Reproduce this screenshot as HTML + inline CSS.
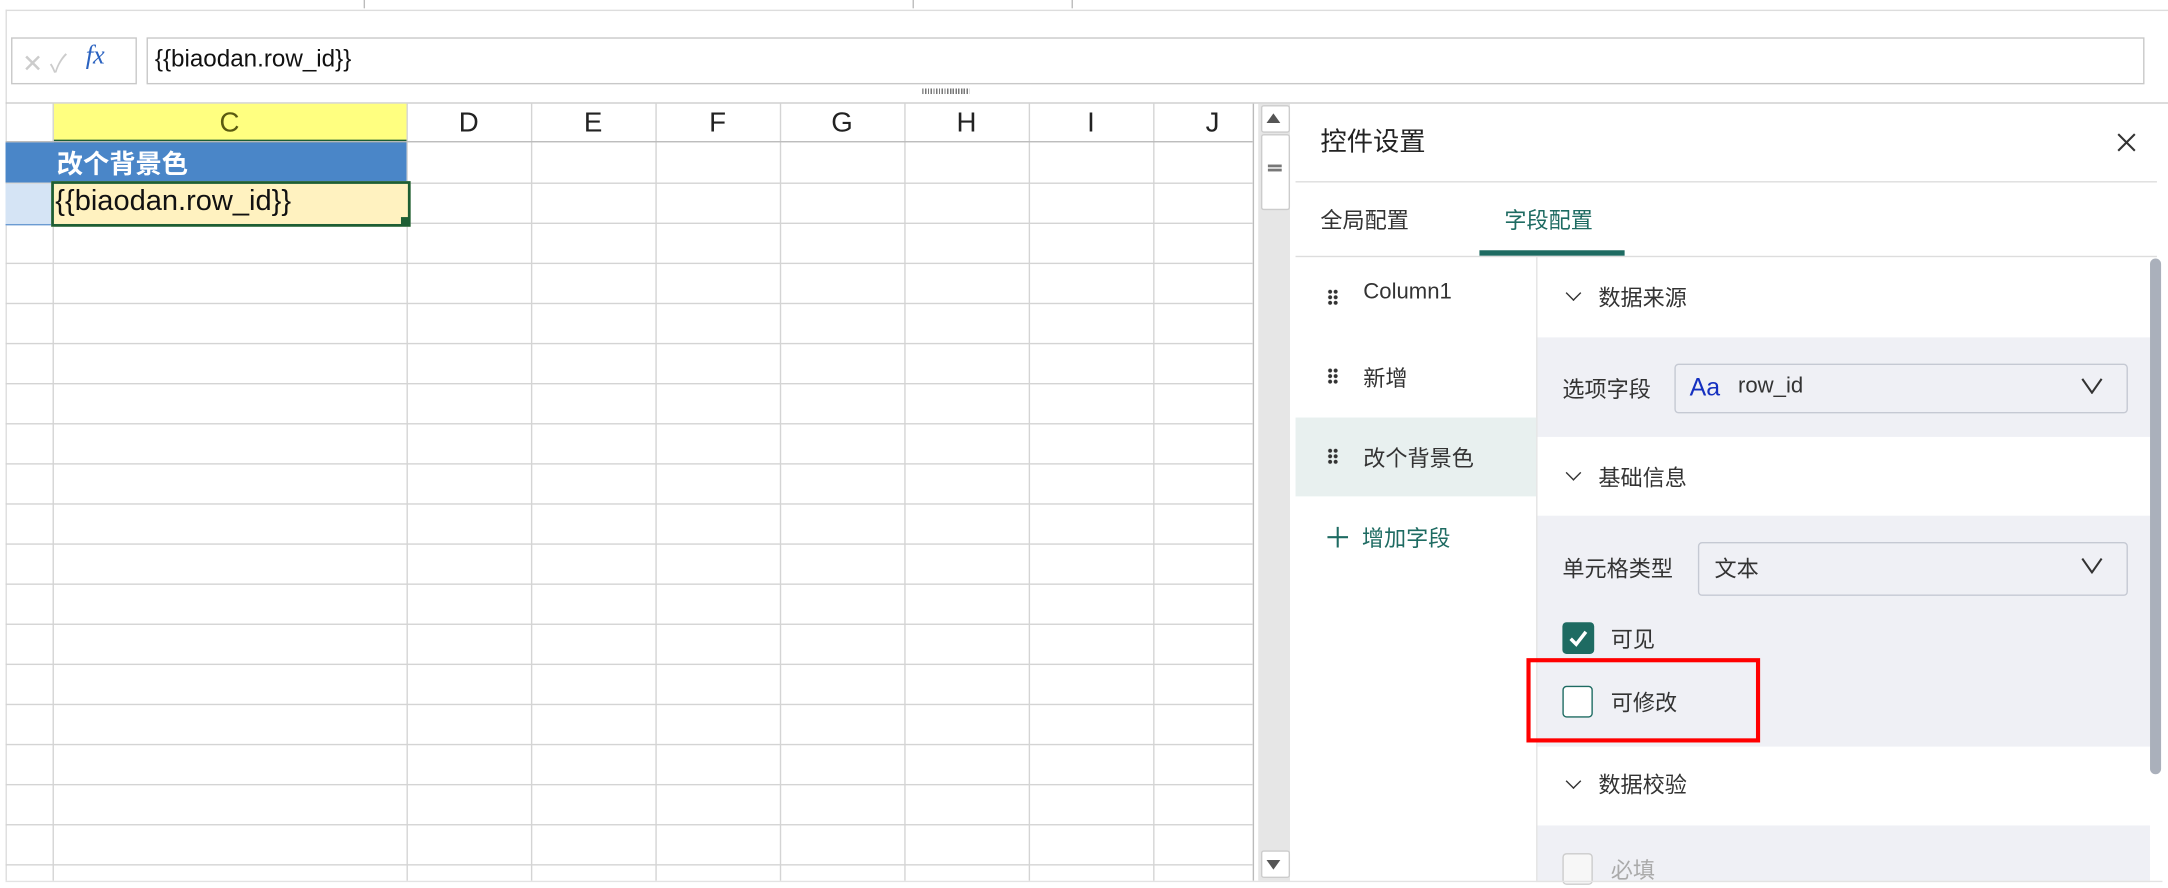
<!DOCTYPE html>
<html><head><meta charset="utf-8"><style>
html,body{margin:0;padding:0;width:2168px;height:888px;overflow:hidden;background:#fff}
#w{position:absolute;left:0;top:0;width:1568px;height:642px;transform:scale(1.38265);transform-origin:0 0;font-family:"Liberation Sans","Noto Sans CJK SC",sans-serif;color:#222}
.a{position:absolute}
.hl{position:absolute;height:1px;background:#d4d4d4}
.vl{position:absolute;width:1px;background:#d4d4d4}
.ch{position:absolute;top:75px;height:27px;font-size:20px;text-align:center;line-height:28px;color:#222}
.t{position:absolute;font-size:16px;white-space:nowrap}
.p{margin-top:-3px}
.dots{position:absolute;width:8px;height:12px;background:radial-gradient(circle,#333 1.3px,transparent 1.6px) 0 0/4px 4px}
.chev{position:absolute;width:7px;height:7px;border-right:1.3px solid #333;border-bottom:1.3px solid #333;transform:rotate(45deg)}
.sel{position:absolute;border:1px solid #c5c9d3;border-radius:3px;background:#eff0f5}
</style></head><body><div id="w">
<div class="hl" style="left:4px;top:7px;width:1564px;background:#ddd"></div>
<div class="vl" style="left:263px;top:0;height:6px;background:#bbb"></div>
<div class="vl" style="left:660px;top:0;height:6px;background:#bbb"></div>
<div class="vl" style="left:775px;top:0;height:6px;background:#bbb"></div>
<div class="vl" style="left:4px;top:7px;height:630px;background:#ddd"></div>
<div class="a" style="left:8px;top:27px;width:89px;height:32px;border:1px solid #c8c8c8"></div>
<div class="t" style="left:16px;top:32px;color:#ccc;font-size:18px">✕ ✓</div>
<div class="t" style="left:62px;top:30px;color:#2a62c0;font-style:italic;font-family:'Liberation Serif',serif;font-size:19px">fx</div>
<div class="a" style="left:106px;top:27px;width:1443px;height:32px;border:1px solid #c8c8c8"></div>
<div class="t" style="left:112px;top:32px;font-size:17.5px;color:#111">{{biaodan.row_id}}</div>
<div class="a" style="left:667px;top:64px;width:34px;height:4px;background:repeating-linear-gradient(90deg,#777 0 1px,transparent 1px 2px)"></div>
<div class="hl" style="left:4px;top:74px;width:1564px;background:#ccc"></div>
<div class="a" style="left:38px;top:75px;width:256px;height:27px;background:#ffff80"></div>
<div class="a" style="left:38px;top:101px;width:256px;height:2px;background:#1d5e34"></div>
<div class="ch" style="left:38px;width:256px;color:#5a5a10">C</div>
<div class="ch" style="left:294px;width:90px">D</div>
<div class="ch" style="left:384px;width:90px">E</div>
<div class="ch" style="left:474px;width:90px">F</div>
<div class="ch" style="left:564px;width:90px">G</div>
<div class="ch" style="left:654px;width:90px">H</div>
<div class="ch" style="left:744px;width:90px">I</div>
<div class="ch" style="left:834px;width:86px">J</div>
<div class="vl" style="left:38px;top:75px;height:562px"></div>
<div class="vl" style="left:294px;top:75px;height:562px"></div>
<div class="vl" style="left:384px;top:75px;height:562px"></div>
<div class="vl" style="left:474px;top:75px;height:562px"></div>
<div class="vl" style="left:564px;top:75px;height:562px"></div>
<div class="vl" style="left:654px;top:75px;height:562px"></div>
<div class="vl" style="left:744px;top:75px;height:562px"></div>
<div class="vl" style="left:834px;top:75px;height:562px"></div>
<div class="vl" style="left:906px;top:75px;height:562px;background:#bbb"></div>
<div class="hl" style="left:4px;top:102px;width:902px;background:#bbb"></div>
<div id="rows"></div>
<div class="a" style="left:4px;top:103px;width:290px;height:29px;background:#4a86c8"></div>
<div class="t" style="left:41px;top:104px;color:#fff;font-weight:bold;font-size:19px">改个背景色</div>
<div class="a" style="left:4px;top:133px;width:34px;height:29px;background:#d5e4f5;border-bottom:1px solid #6b9bd2"></div>
<div class="a" style="left:37px;top:131px;width:256px;height:29px;background:#fff2c0;border:2px solid #1d5e34"></div>
<div class="a" style="left:290px;top:157px;width:6px;height:6px;background:#1d5e34"></div>
<div class="t" style="left:40px;top:134px;color:#111;font-size:21px">{{biaodan.row_id}}</div>
<div class="a" style="left:910px;top:75px;width:23px;height:562px;background:#e6e6e6"></div>
<div class="a" style="left:912px;top:76px;width:19px;height:18px;background:#fff;border:1px solid #ccc;border-radius:2px"></div>
<div class="a" style="left:916px;top:82px;width:0;height:0;border-left:5px solid transparent;border-right:5px solid transparent;border-bottom:7px solid #555"></div>
<div class="a" style="left:912px;top:97px;width:19px;height:53px;background:#fff;border:1px solid #ccc;border-radius:2px"></div>
<div class="a" style="left:917px;top:119px;width:10px;height:1.5px;background:#777;box-shadow:0 3px 0 #777"></div>
<div class="a" style="left:912px;top:615px;width:19px;height:18px;background:#fff;border:1px solid #ccc;border-radius:2px"></div>
<div class="a" style="left:916px;top:622px;width:0;height:0;border-left:5px solid transparent;border-right:5px solid transparent;border-top:7px solid #555"></div>
<div class="t p" style="left:955px;top:91px;font-size:19px;color:#222">控件设置</div>
<svg class="a" style="left:1531px;top:96px" width="14" height="14"><path d="M1 1L13 13M13 1L1 13" stroke="#333" stroke-width="1.5"/></svg>
<div class="hl" style="left:937px;top:131px;width:623px;background:#ddd"></div>
<div class="t p" style="left:955px;top:149px;color:#333">全局配置</div>
<div class="t p" style="left:1088px;top:149px;color:#1e6b62">字段配置</div>
<div class="a" style="left:1070px;top:181px;width:105px;height:4px;background:#1e6b62"></div>
<div class="hl" style="left:937px;top:185px;width:623px;background:#ddd"></div>
<div class="vl" style="left:1111px;top:186px;height:452px;background:#e3e3e3"></div>
<div class="a" style="left:937px;top:302px;width:174px;height:57px;background:#e8f0ef"></div>
<div class="dots" style="left:960px;top:209px"></div>
<div class="t p" style="left:986px;top:206px;color:#333">Column1</div>
<div class="dots" style="left:960px;top:266px"></div>
<div class="t p" style="left:986px;top:263px;color:#333">新增</div>
<div class="dots" style="left:960px;top:324px"></div>
<div class="t p" style="left:986px;top:321px;color:#333">改个背景色</div>
<svg class="a" style="left:960px;top:381px" width="15" height="15"><path d="M7.5 0V15M0 7.5H15" stroke="#1e6b62" stroke-width="1.5"/></svg>
<div class="t p" style="left:985px;top:379px;color:#1e6b62">增加字段</div>
<div class="chev" style="left:1134px;top:208px"></div>
<div class="t p" style="left:1156px;top:205px;color:#333">数据来源</div>
<div class="a" style="left:1112px;top:244px;width:443px;height:72px;background:#eff0f5"></div>
<div class="t p" style="left:1130px;top:271px;color:#333">选项字段</div>
<div class="sel" style="left:1211px;top:263px;width:326px;height:34px"></div>
<div class="t" style="left:1222px;top:270px;color:#1530c0;font-size:18px">Aa</div>
<div class="t" style="left:1257px;top:271px;color:#333">row_id</div>
<svg class="a" style="left:1505px;top:273px" width="16" height="12"><path d="M1 1L8 11L15 1" stroke="#333" stroke-width="1.5" fill="none"/></svg>
<div class="chev" style="left:1134px;top:338px"></div>
<div class="t p" style="left:1156px;top:335px;color:#333">基础信息</div>
<div class="a" style="left:1112px;top:373px;width:443px;height:167px;background:#eff0f5"></div>
<div class="t p" style="left:1130px;top:401px;color:#333">单元格类型</div>
<div class="sel" style="left:1228px;top:392px;width:309px;height:37px"></div>
<div class="t p" style="left:1240px;top:401px;color:#333">文本</div>
<svg class="a" style="left:1505px;top:403px" width="16" height="12"><path d="M1 1L8 11L15 1" stroke="#333" stroke-width="1.5" fill="none"/></svg>
<div class="a" style="left:1130px;top:450px;width:23px;height:23px;background:#1e6b62;border-radius:3px"></div>
<svg class="a" style="left:1130px;top:450px" width="23" height="23"><path d="M6 12l4 4 7-9" stroke="#fff" stroke-width="2.5" fill="none"/></svg>
<div class="t p" style="left:1165px;top:452px;color:#333">可见</div>
<div class="a" style="left:1130px;top:496px;width:20px;height:21px;border:1.5px solid #1e6b62;border-radius:3px;background:#fff"></div>
<div class="t p" style="left:1165px;top:498px;color:#333">可修改</div>
<div class="a" style="left:1104px;top:476px;width:163px;height:55px;border:3px solid #f00"></div>
<div class="chev" style="left:1134px;top:561px"></div>
<div class="t p" style="left:1156px;top:557px;color:#333">数据校验</div>
<div class="a" style="left:1112px;top:597px;width:443px;height:41px;background:#eff0f5"></div>
<div class="a" style="left:1130px;top:617px;width:20px;height:21px;border:1px solid #ccc;border-radius:3px;background:#f7f7f7"></div>
<div class="t p" style="left:1165px;top:619px;color:#aaa">必填</div>
<div class="a" style="left:1555px;top:187px;width:8px;height:373px;background:#aab0bb;border-radius:4px"></div>
<div class="hl" style="left:4px;top:637px;width:1560px;background:#e3e3e3"></div>
</div>
<script>
var r=document.getElementById('rows'),h='';
var ys=[132,161,190,219,248,277,306,335,364,393,422,451,480,509,538,567,596,625];
for(var i=0;i<ys.length;i++)h+='<div class="hl" style="left:4px;top:'+ys[i]+'px;width:902px"></div>';
r.outerHTML=h;
</script>
</body></html>
